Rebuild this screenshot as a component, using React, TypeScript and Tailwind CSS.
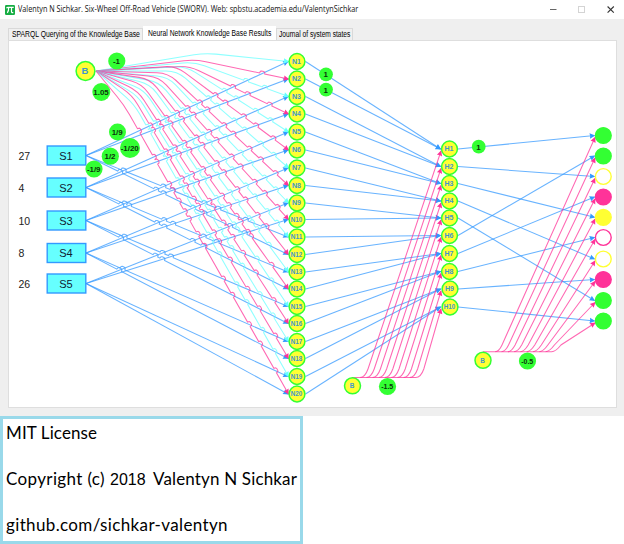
import React from 'react';

type Pt = [number, number];

const BLUE = '#3399ff';
const PINK = '#ff3399';
const CYAN = '#66ffff';
const GREEN = '#33ff33';
const YELLOW = '#ffff33';

const nY = [61.5, 79, 96.5, 114, 132, 150, 168, 185.5, 203, 219.5, 237, 254.5, 272, 289, 306.5, 323.5, 341.5, 358.5, 376.5, 394];
const hY = [149, 166.5, 183.5, 201, 218, 235.5, 253.5, 271.5, 289, 307];
const sY = [155.5, 187.5, 220.5, 253, 283.5];
const outputs: { y: number; fill: string; stroke: string }[] = [
  { y: 135.5, fill: GREEN, stroke: GREEN },
  { y: 156, fill: GREEN, stroke: GREEN },
  { y: 176.5, fill: '#fff', stroke: YELLOW },
  { y: 197, fill: PINK, stroke: PINK },
  { y: 217.3, fill: YELLOW, stroke: YELLOW },
  { y: 237.5, fill: '#fff', stroke: PINK },
  { y: 259, fill: '#fff', stroke: YELLOW },
  { y: 279.5, fill: PINK, stroke: PINK },
  { y: 300.5, fill: GREEN, stroke: GREEN },
  { y: 321, fill: GREEN, stroke: GREEN },
];
const hTargets = [0, 2, 4, 6, 8, 1, 3, 5, 7, 9];

// Corner of each bias edge, from N1 to N20.
const bends: Pt[] = [
  [205, 53], [195, 59.5], [194, 62], [189, 66], [186, 66.5], [176, 66], [177, 71], [168, 73], [168, 77], [159, 77],
  [159, 82], [150, 79], [150, 84], [142, 84], [144, 90], [138, 91], [138, 96], [132, 95], [134, 104], [124, 105],
];

function cross(a: Pt, b: Pt, c: Pt, d: Pt): number | null {
  const rx = b[0] - a[0], ry = b[1] - a[1], sx = d[0] - c[0], sy = d[1] - c[1];
  const den = rx * sy - ry * sx;
  if (Math.abs(den) < 1e-6) return null;
  const t = ((c[0] - a[0]) * sy - (c[1] - a[1]) * sx) / den;
  const u = ((c[0] - a[0]) * ry - (c[1] - a[1]) * rx) / den;
  return t > 0.01 && t < 0.97 && u > 0.03 && u < 0.97 ? t : null;
}

// Straight run from a to b with a small square-shouldered hop wherever it jumps over another line.
function jumps(a: Pt, b: Pt, others: [Pt, Pt][]): string {
  const len = Math.hypot(b[0] - a[0], b[1] - a[1]);
  const ux = (b[0] - a[0]) / len, uy = (b[1] - a[1]) / len;
  const at = others
    .map(([c, d]) => cross(a, b, c, d))
    .filter((t): t is number => t !== null)
    .map((t) => t * len)
    .sort((p, q) => p - q);
  const pt = (s: number, h: number) => `${a[0] + ux * s + uy * h} ${a[1] + uy * s - ux * h}`;
  let out = '';
  let last = 0;
  for (const s of at) {
    if (s - 2.6 < last) continue;
    out += `L${pt(s - 2.6, 0)}L${pt(s - 2.2, 1.8)}L${pt(s - 1, 2.4)}L${pt(s + 1, 2.4)}L${pt(s + 2.2, 1.8)}L${pt(s + 2.6, 0)}`;
    last = s + 2.2;
  }
  return out + `L${b[0]} ${b[1]}`;
}

const up: [Pt, Pt][] = [];
const down: [Pt, Pt][] = [];
sY.forEach((y, i) => {
  [0, 1].forEach((k) => {
    up.push([[86, y], [288, nY[i * 2 + k]]]);
    down.push([[86, y], [288, nY[10 + i * 2 + k]]]);
  });
});

function Head({ from, to, color }: { from: Pt; to: Pt; color: string }) {
  const angle = (Math.atan2(to[1] - from[1], to[0] - from[0]) * 180) / Math.PI;
  return <path d="M0.8 0L-4.8 -2.7L-4.3 0L-4.8 2.7Z" fill={color} transform={`translate(${to[0]} ${to[1]}) rotate(${angle})`} />;
}

function Edge({ from, to, d, color }: { from: Pt; to: Pt; d?: string; color: string }) {
  return (
    <g>
      <path d={d ?? `M${from[0]} ${from[1]}L${to[0]} ${to[1]}`} fill="none" stroke={color} strokeWidth={1.05} strokeOpacity={0.74} />
      <Head from={from} to={to} color={color} />
    </g>
  );
}

function Node({ x, y, label, r = 7.9, size = 6.4 }: { x: number; y: number; label: string; r?: number; size?: number }) {
  const width = label.length > 2 ? 11.5 : label.length > 1 ? 9 : undefined;
  return (
    <g>
      <circle cx={x} cy={y} r={r} fill={YELLOW} stroke={GREEN} strokeWidth={1.5} />
      <text x={x - 0.5} y={y + size * 0.36} fontSize={size} fontWeight={700} textAnchor="middle" fill="#3f98cc"
        textLength={width} lengthAdjust="spacingAndGlyphs">{label}</text>
    </g>
  );
}

function Badge({ x, y, label, r = 8.6, size = 7.9 }: { x: number; y: number; label: string; r?: number; size?: number }) {
  return (
    <g>
      <circle cx={x} cy={y} r={r} fill={GREEN} />
      <text x={x - 0.3} y={y + size * 0.37} fontSize={size} fontWeight={700} textAnchor="middle" fill="#0b330b">{label}</text>
    </g>
  );
}

function Network() {
  return (
    <svg className="block h-full w-full font-['Liberation_Sans',Arial,sans-serif]" viewBox="9 41 607 366">
      {up.map(([a, b], i) => <Edge key={i} from={a} to={b} color={BLUE} />)}
      {down.map(([a, b], i) => <Edge key={i} from={a} to={b} color={BLUE} d={`M${a[0]} ${a[1]}${jumps(a, b, up)}`} />)}
      {nY.map((y, i) => <Edge key={i} from={[305.5, y]} to={[440.5, hY[Math.floor(i / 2)]]} color={BLUE} />)}
      {hTargets.map((t, i) => <Edge key={i} from={[458, hY[i]]} to={[594.5, outputs[t].y]} color={BLUE} />)}

      {nY.map((y, i) => {
        const b = bends[i];
        const end: Pt = [288.5, y];
        const start: Pt = [96, 71];
        const l1 = Math.hypot(b[0] - start[0], b[1] - start[1]);
        const l2 = Math.hypot(end[0] - b[0], end[1] - b[1]);
        const p: Pt = [b[0] - ((b[0] - start[0]) / l1) * 11, b[1] - ((b[1] - start[1]) / l1) * 11];
        const q: Pt = [b[0] + ((end[0] - b[0]) / l2) * 11, b[1] + ((end[1] - b[1]) / l2) * 11];
        return (
          <Edge key={i} from={q} to={end} color={i % 2 ? PINK : CYAN}
            d={`M${start[0]} ${start[1]}L${p[0]} ${p[1]}Q${b[0]} ${b[1]} ${q[0]} ${q[1]}${jumps(q, end, [...up, ...down])}`} />
        );
      })}

      {hY.map((y, i) => {
        const x = 363 + i * 6.2;
        const q: Pt = [x + 5, 369];
        return <Edge key={i} from={q} to={[441, y + 2]} color={PINK} d={`M${i ? x - 9 : 352} 377.5H${x - 3}Q${x + 2} 377.5 ${q[0]} ${q[1]}L441 ${y + 2}`} />;
      })}
      {outputs.map((o, i) => {
        const x = 497 + i * 6.3;
        const q: Pt = [x + 5 + i * 0.25, 345];
        return <Edge key={i} from={q} to={[595, o.y + 2]} color={PINK} d={`M${i ? x - 8 : 483} 351.7H${x - 2}Q${x + 2} 351.7 ${q[0]} ${q[1]}L595 ${o.y + 2}`} />;
      })}

      {sY.map((y, i) => (
        <g key={i}>
          <rect x={47.2} y={y - 9.5} width={38.6} height={19} fill={CYAN} stroke={BLUE} strokeWidth={1.4} />
          <text x={66} y={y + 4} fontSize={11} textAnchor="middle" textLength={13.5} lengthAdjust="spacingAndGlyphs" fill="#123">{`S${i + 1}`}</text>
          <text x={18.5} y={y + 4.3} fontSize={10.5} fill="#222">{[27, 4, 10, 8, 26][i]}</text>
        </g>
      ))}
      {nY.map((y, i) => <Node key={i} x={297} y={y} label={`N${i + 1}`} />)}
      {hY.map((y, i) => <Node key={i} x={i > 7 ? 450 : 449.5} y={y} label={`H${i + 1}`} />)}
      {outputs.map((o, i) => <circle key={i} cx={603.3} cy={o.y} r={7.9} fill={o.fill} stroke={o.stroke} strokeWidth={1.4} />)}

      <Node x={85.5} y={71} label="B" r={9.4} size={9.5} />
      <Node x={352.5} y={385.8} label="B" r={8} />
      <Node x={483} y={360.3} label="B" r={8} />
      <Badge x={116.8} y={61} label="-1" />
      <Badge x={101.3} y={92} r={9} label="1.05" />
      <Badge x={117.5} y={132} r={8.5} label="1/9" />
      <Badge x={130} y={148} r={10} label="-1/20" />
      <Badge x={110.3} y={156.2} label="1/2" />
      <Badge x={94} y={169} label="-1/9" />
      <Badge x={326} y={74.3} r={6.9} label="1" />
      <Badge x={326} y={89.6} r={6.9} label="1" />
      <Badge x={478.7} y={146.7} r={6.9} label="1" />
      <Badge x={387.5} y={386.5} size={7} label="-1.5" />
      <Badge x={527.5} y={361} size={7} label="-0.5" />
    </svg>
  );
}

export default function App() {
  return (
    <div className="flex h-[544px] w-[624px] flex-col overflow-hidden bg-white text-black">
      <div className="flex h-[416px] flex-col bg-[#efefef]">
        <header className="flex h-[19px] shrink-0 items-center bg-white pl-[5px] font-['Open_Sans','Noto_Sans',sans-serif]">
          <svg className="h-[10px] w-[10px] shrink-0" viewBox="0 0 10 10">
            <rect width="10" height="10" rx="1.2" fill="#16ad43" />
            <path d="M1.5 3.2Q2 2.3 3 2.3H8.7M3.7 2.5Q3.8 6 2.3 7.8M6.5 2.5V6.8Q6.6 8 8.3 7.5" fill="none" stroke="#fff" strokeWidth="1.2" />
          </svg>
          <span className="ml-[3px] w-[345px] origin-left scale-x-[0.823] whitespace-nowrap text-[8.8px] leading-none text-[#111]">
            Valentyn N Sichkar. Six-Wheel Off-Road Vehicle (SWORV). Web: spbstu.academia.edu/ValentynSichkar
          </span>
          <svg className="ml-auto mr-[7px] h-[10px] w-[68px] shrink-0" viewBox="0 0 68 10" fill="none">
            <path d="M1 4.500H7.500" stroke="#666" />
            <rect x="29.500" y="1.500" width="6" height="6" stroke="#d4d4d4" />
            <path d="M58.600 1.500L64.800 7.700M64.800 1.500L58.600 7.700" stroke="#333" strokeWidth="1.1" />
          </svg>
        </header>
        <nav className="flex h-[21px] shrink-0 items-end pl-[8px] font-['Liberation_Sans',Arial,sans-serif] text-[8.4px] leading-none">
          <div className="flex h-[12px] w-[135px] items-center border border-b-0 border-[#d9d9d9] bg-[#f0f0f0] pl-[3px]">
            <span className="w-[128px] origin-left scale-x-[0.81] whitespace-nowrap">SPARQL Querying of the Knowledge Base</span>
          </div>
          <div className="flex h-[14px] w-[133px] items-center bg-white pl-[5px]">
            <span className="w-[124px] origin-left scale-x-[0.805] whitespace-nowrap">Neural Network Knowledge Base Results</span>
          </div>
          <div className="flex h-[12px] w-[77px] items-center border border-b-0 border-[#d9d9d9] bg-[#f0f0f0] pl-[2px]">
            <span className="w-[72px] origin-left scale-x-[0.79] whitespace-nowrap">Journal of system states</span>
          </div>
        </nav>
        <main className="ml-[8px] h-[368px] w-[609px] border border-[#dedede] bg-white">
          <Network />
        </main>
      </div>
      <footer className="flex h-[128px] w-[303px] flex-col border-[3px] border-[#99d9ea] bg-white pl-[3px] font-['Lato',sans-serif] text-[17px] leading-none">
        <p className="mt-[5px] h-[46px] whitespace-nowrap tracking-[0.1px]">MIT License</p>
        <p className="flex h-[46px] whitespace-nowrap">
          <span className="w-[104px] tracking-[0.36px]">Copyright (c)</span>
          <span className="w-[43px] pt-[2px] font-['Liberation_Sans',sans-serif] text-[16px]">2018</span>
          <span className="tracking-[0.16px]">Valentyn N Sichkar</span>
        </p>
        <p className="whitespace-nowrap tracking-[0.36px]">github.com/sichkar-valentyn</p>
      </footer>
    </div>
  );
}
